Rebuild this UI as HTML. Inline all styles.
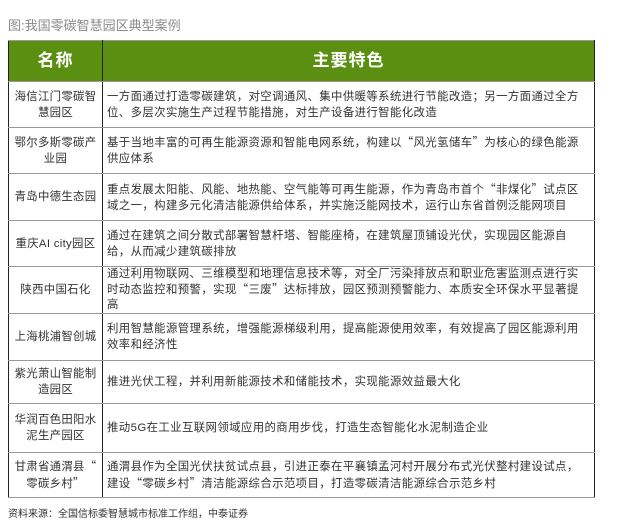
<!DOCTYPE html>
<html><head><meta charset="utf-8"><style>
body{margin:0;width:622px;height:521px;background:#fff;font-family:"Liberation Sans","Noto Sans CJK SC",sans-serif;position:relative;overflow:hidden}
.t{position:absolute;left:8px;top:15px;font-size:13px;color:#8a8a8a}
table{position:absolute;left:8px;top:40px;width:587px;border-collapse:collapse;table-layout:fixed}
td{border:1.5px solid #222;font-size:11.4px;color:#333;line-height:16px;padding:0 4px;white-space:nowrap;letter-spacing:.4px}
td.n{text-align:center;padding:0 2px;letter-spacing:.3px}
tr.h td{background:#5a8f12;color:#fff;font-weight:bold;font-size:17px;text-align:center;height:40px;letter-spacing:1px}
tr td{border-top-color:#999;border-bottom-color:#999}
q{quotes:none;font-family:"Noto Sans CJK SC",sans-serif}
.s{position:absolute;left:8px;top:505px;font-size:10px;color:#333}
</style></head><body>
<div class="t">图:我国零碳智慧园区典型案例</div>
<table>
<colgroup><col style="width:94px"><col></colgroup>
<tr class="h"><td>名称</td><td>主要特色</td></tr>
<tr style="height:46px"><td class="n">海信江门零碳智<br>慧园区</td><td>一方面通过打造零碳建筑，对空调通风、集中供暖等系统进行节能改造；另一方面通过全方<br>位、多层次实施生产过程节能措施，对生产设备进行智能化改造</td></tr>
<tr style="height:46px"><td class="n">鄂尔多斯零碳产<br>业园</td><td>基于当地丰富的可再生能源资源和智能电网系统，构建以<q>“</q>风光氢储车<q>”</q>为核心的绿色能源<br>供应体系</td></tr>
<tr style="height:47px"><td class="n">青岛中德生态园</td><td>重点发展太阳能、风能、地热能、空气能等可再生能源，作为青岛市首个<q>“</q>非煤化<q>”</q>试点区<br>域之一，构建多元化清洁能源供给体系，并实施泛能网技术，运行山东省首例泛能网项目</td></tr>
<tr style="height:46px"><td class="n">重庆AI city园区</td><td>通过在建筑之间分散式部署智慧杆塔、智能座椅，在建筑屋顶铺设光伏，实现园区能源自<br>给，从而减少建筑碳排放</td></tr>
<tr style="height:46px"><td class="n">陕西中国石化</td><td style="vertical-align:top;line-height:15px">通过利用物联网、三维模型和地理信息技术等，对全厂污染排放点和职业危害监测点进行实<br>时动态监控和预警，实现<q>“</q>三废<q>”</q>达标排放，园区预测预警能力、本质安全环保水平显著提<br>高</td></tr>
<tr style="height:47px"><td class="n">上海桃浦智创城</td><td>利用智慧能源管理系统，增强能源梯级利用，提高能源使用效率，有效提高了园区能源利用<br>效率和经济性</td></tr>
<tr style="height:43px"><td class="n">紫光萧山智能制<br>造园区</td><td>推进光伏工程，并利用新能源技术和储能技术，实现能源效益最大化</td></tr>
<tr style="height:49px"><td class="n">华润百色田阳水<br>泥生产园区</td><td>推动5G在工业互联网领域应用的商用步伐，打造生态智能化水泥制造企业</td></tr>
<tr style="height:45px"><td class="n">甘肃省通渭县<q>“</q><br>零碳乡村<q>”</q></td><td>通渭县作为全国光伏扶贫试点县，引进正泰在平襄镇孟河村开展分布式光伏整村建设试点，<br>建设<q>“</q>零碳乡村<q>”</q>清洁能源综合示范项目，打造零碳清洁能源综合示范乡村</td></tr>
</table>
<div class="s">资料来源：全国信标委智慧城市标准工作组，中泰证券</div>
</body></html>
